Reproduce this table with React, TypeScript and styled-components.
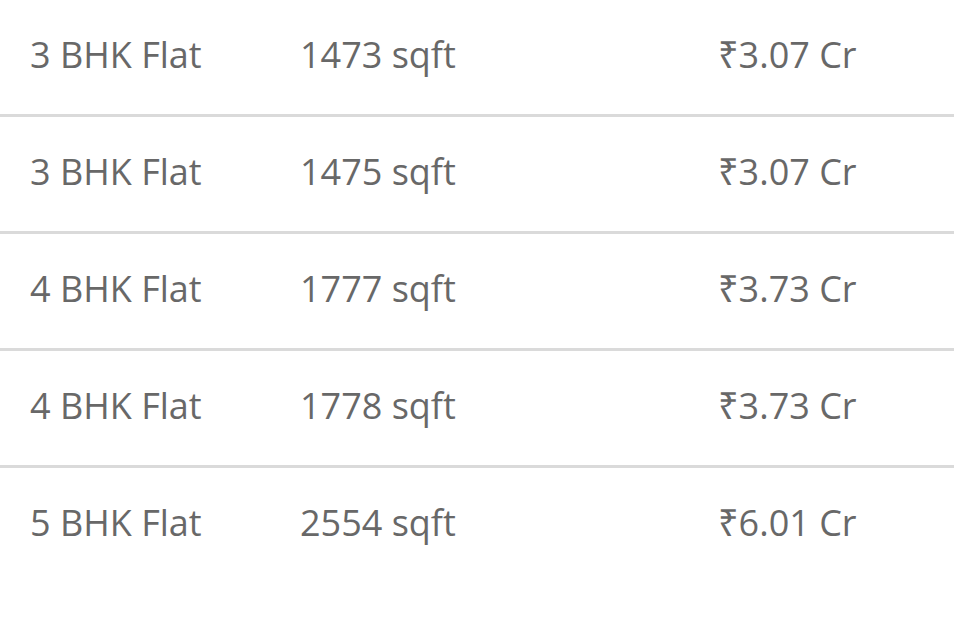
import { createGlobalStyle } from "styled-components";
import styled from "styled-components";

const GlobalStyle = createGlobalStyle`
  html, body {
    margin: 0;
    padding: 0;
    background: #fff;
  }
  body {
    font-family: "Open Sans", "Noto Sans", sans-serif;
  }
`;

const units = [
  { type: "3 BHK Flat", area: "1473 sqft", price: "₹3.07 Cr" },
  { type: "3 BHK Flat", area: "1475 sqft", price: "₹3.07 Cr" },
  { type: "4 BHK Flat", area: "1777 sqft", price: "₹3.73 Cr" },
  { type: "4 BHK Flat", area: "1778 sqft", price: "₹3.73 Cr" },
  { type: "5 BHK Flat", area: "2554 sqft", price: "₹6.01 Cr" },
];

export default function App() {
  return (
    <>
      <GlobalStyle />
      <SList>
        {units.map((u, i) => (
          <SRow key={i} $last={i === units.length - 1}>
            <SCell $w={270}>{u.type}</SCell>
            <SCell $w={418}>{u.area}</SCell>
            <SCell>{u.price}</SCell>
          </SRow>
        ))}
      </SList>
    </>
  );
}

const SList = styled.div`
  width: 100%;
`;

const SRow = styled.div<{ $last: boolean }>`
  display: flex;
  align-items: center;
  box-sizing: border-box;
  height: 117px;
  padding: 0 0 6px 30px;
  border-bottom: 3px solid ${(p) => (p.$last ? "transparent" : "#dadada")};
`;

const SCell = styled.div<{ $w?: number }>`
  flex: ${(p) => (p.$w ? `0 0 ${p.$w}px` : "1")};
  font-size: 36px;
  color: #686868;
  white-space: nowrap;
`;
